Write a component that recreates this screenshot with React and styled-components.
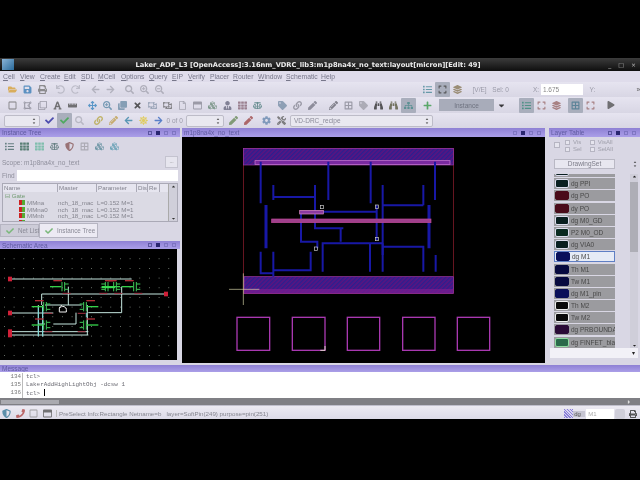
import React from "react";
import styled, { createGlobalStyle } from "styled-components";
import {
  FaFolderOpen, FaSave, FaPrint, FaUndo, FaRedo, FaArrowLeft, FaArrowRight, FaSearch, FaSearchPlus, FaSearchMinus,
  FaRegSquare, FaDrawPolygon, FaRegClone, FaFont, FaRulerHorizontal, FaArrowsAlt, FaClone, FaTimes, FaRegObjectUngroup,
  FaBalanceScale, FaCheck, FaLink, FaPencilAlt, FaSun, FaCog, FaTools, FaBinoculars, FaTag, FaPlus, FaList, FaTh,
  FaSitemap, FaRegFile, FaUserTie, FaPen, FaCaretDown, FaCaretUp, FaCaretRight, FaExpand, FaLayerGroup, FaPhone, FaShieldAlt,
  FaRegWindowMaximize, FaPlay, FaBorderAll, FaCubes
} from "react-icons/fa";

const sans = `"Liberation Sans", Arial, sans-serif`;

const GlobalStyle = createGlobalStyle`
  html, body { margin: 0; padding: 0; background: #000; }
  * { box-sizing: border-box; }
`;

const Page = styled.div`
  width: 640px;
  height: 480px;
  padding-top: 58px;
  background: #000;
  font-family: ${sans};
  overflow: hidden;
  display: flex;
  flex-direction: column;
  filter: blur(0.4px);
`;

const Window = styled.div`
  height: 361px;
  display: flex;
  flex-direction: column;
  background: #dddbe9;
  overflow: hidden;
`;

const TitleBar = styled.div`
  height: 13px;
  flex: none;
  position: relative;
  display: flex;
  align-items: center;
  justify-content: center;
  padding-right: 24px;
  background: linear-gradient(#3c3c3c, #0e0e0e);
  color: #ececec;
  font-family: "DejaVu Sans", sans-serif;
  font-size: 6.7px;
  font-weight: bold;
  white-space: nowrap;
`;

const AppBadge = styled.span`
  position: absolute;
  left: 2px;
  top: 1px;
  width: 12px;
  height: 11px;
  background: linear-gradient(135deg, #8ab4d8, #2a6a9a);
`;

const WinControls = styled.span`
  position: absolute;
  right: 4px;
  top: 0;
  height: 13px;
  display: flex;
  align-items: center;
  gap: 7px;
  color: #bbb;
  font-size: 6px;
  font-weight: normal;
`;

const MenuBar = styled.div`
  height: 11px;
  flex: none;
  display: flex;
  align-items: center;
  padding-left: 3px;
  background: #dfdceb;
  color: #77778a;
  font-size: 6.8px;
`;

const MenuItem = styled.span`
  width: ${(p) => p.$w}px;
  white-space: nowrap;
  &::first-letter { text-decoration: underline; }
`;

const Toolbar = styled.div`
  height: ${(p) => p.$h}px;
  flex: none;
  display: flex;
  align-items: center;
  padding-left: ${(p) => p.$pad ?? 4.5}px;
  background: linear-gradient(#e6e4f0, #d8d6e4);
  color: #8a8a98;
  font-size: 7px;
  white-space: nowrap;
`;

const Group = styled.div`
  display: flex;
  align-items: center;
  margin-left: ${(p) => p.$ml || 0}px;
`;

const ToolSlot = styled.span`
  width: ${(p) => p.$w || 15}px;
  height: 15px;
  flex: none;
  margin-left: ${(p) => p.$ml || 0}px;
  display: flex;
  align-items: center;
  justify-content: center;
  color: ${(p) => p.$c || "#888"};
  font-size: ${(p) => p.$s || 9}px;
  background: ${(p) => (p.$on ? "#a9aebc" : "transparent")};
  border-radius: 1px;
  svg { opacity: 0.8; }
`;

const Combo = styled.span`
  width: ${(p) => p.$w}px;
  height: ${(p) => p.$h || 12}px;
  flex: none;
  margin-left: ${(p) => p.$ml || 0}px;
  display: flex;
  align-items: center;
  justify-content: space-between;
  padding: 0 3px;
  background: #e9e8f0;
  border: 1px solid #bdbcc8;
  border-radius: 2px;
  color: #8a8a98;
  font-size: 6.5px;
`;

const Spin = styled.span`
  display: flex;
  flex-direction: column;
  color: #333;
  font-size: 4px;
  line-height: 3px;
`;

const Label = styled.span`
  margin-left: ${(p) => p.$ml || 0}px;
  width: ${(p) => (p.$w ? `${p.$w}px` : "auto")};
  color: ${(p) => p.$c || "#9a9aa8"};
  font-size: 6.5px;
`;

const ValueInput = styled.span`
  width: 42px;
  height: 11px;
  margin-left: 3px;
  padding-left: 2px;
  background: #fff;
  color: #888;
  font-size: 6.5px;
  line-height: 11px;
`;

const InstanceButton = styled.span`
  width: 55px;
  height: 12px;
  margin-left: 4.5px;
  display: flex;
  align-items: center;
  justify-content: center;
  background: #a8acba;
  color: #6f7380;
  font-size: 6.5px;
`;

const Workspace = styled.div`
  flex: none;
  height: 237px;
  display: flex;
  background: #d9d7e4;
`;

const LeftColumn = styled.div`
  width: 180px;
  flex: none;
  display: flex;
  flex-direction: column;
`;

const CenterColumn = styled.div`
  width: 363px;
  margin-left: 2px;
  flex: none;
  display: flex;
  flex-direction: column;
`;

const RightColumn = styled.div`
  width: 91px;
  margin-left: 4px;
  flex: none;
  display: flex;
  flex-direction: column;
`;

const DockTitle = styled.div`
  height: ${(p) => p.$h || 9}px;
  margin-top: ${(p) => p.$mt || 0}px;
  flex: none;
  display: flex;
  align-items: center;
  justify-content: space-between;
  padding: 0 4px 0 2px;
  background: linear-gradient(#8e80d4, #ab9fe8);
  color: #5f5aa0;
  font-size: 6.5px;
  white-space: nowrap;
`;

const DockButtons = styled.span`
  display: flex;
  align-items: center;
  gap: 4px;
`;

const DockGlyph = styled.span`
  width: 4px;
  height: 4px;
  border: ${(p) => (p.$solid ? "none" : "1px solid #5b56a0")};
  background: ${(p) => (p.$solid ? "#2a2670" : "transparent")};
  opacity: ${(p) => (p.$faint ? 0.45 : 1)};
`;

const IconStrip = styled.div`
  height: 18px;
  flex: none;
  display: flex;
  align-items: center;
  padding-left: 2px;
`;

const FieldRow = styled.div`
  height: ${(p) => p.$h}px;
  flex: none;
  display: flex;
  align-items: center;
  padding: 0 2px;
  color: #8f8f9c;
  font-size: 6.5px;
`;

const FindInput = styled.span`
  flex: 1;
  height: 11px;
  margin-left: 2px;
  background: #fff;
`;

const MiniButton = styled.span`
  width: 13px;
  height: 12px;
  margin-left: auto;
  background: #e6e5ee;
  border: 1px solid #c4c3cf;
  color: #777;
  font-size: 5px;
  line-height: 8px;
  text-align: center;
`;

const TreeTable = styled.div`
  height: 39px;
  margin: 1px 2px 0;
  flex: none;
  position: relative;
  overflow: hidden;
  background: #dbdae4;
  border: 1px solid #aaa9b6;
  color: #85858f;
  font-size: 6.2px;
`;

const TreeGrid = styled.div`
  display: grid;
  grid-template-columns: ${(p) => p.$cols};
  height: ${(p) => p.$h}px;
  align-items: center;
  white-space: nowrap;
  overflow: hidden;
`;

const HeadCell = styled.span`
  height: 8px;
  padding-left: 1px;
  background: #e6e5ef;
  border-right: 1px solid #aaa9b6;
  line-height: 8px;
  color: #83838f;
`;

const GateLabel = styled.span`
  padding-left: 2px;
  color: #6f9a6f;
`;

const NameCell = styled.span`
  display: flex;
  align-items: center;
  gap: 2px;
  padding-left: 16px;
`;

const MosMark = styled.span`
  width: 6px;
  height: 5px;
  background: linear-gradient(90deg, #c22 50%, #5a3 50%);
`;

const TableScroll = styled.span`
  position: absolute;
  right: 0;
  top: 0;
  bottom: 0;
  width: 9px;
  background: #d0cfda;
  border-left: 1px solid #aaa;
  display: flex;
  flex-direction: column;
  justify-content: space-between;
  align-items: center;
  color: #333;
  font-size: 5px;
`;

const TabRow = styled.div`
  height: 16px;
  flex: none;
  display: flex;
  align-items: flex-end;
`;

const Tab = styled.span`
  height: ${(p) => (p.$active ? 15 : 13)}px;
  width: ${(p) => p.$w}px;
  margin-bottom: ${(p) => (p.$active ? 0 : 1)}px;
  display: flex;
  align-items: center;
  gap: 4px;
  padding-left: 5px;
  background: ${(p) => (p.$active ? "#eceaf3" : "#cdccd8")};
  border: 1px solid #b6b5c2;
  color: #8a8a96;
  font-size: 6.3px;
  white-space: nowrap;
  svg { color: #7ab87a; font-size: 8px; flex: none; }
`;

const Viewport = styled.div`
  flex: none;
  height: ${(p) => p.$h}px;
  width: ${(p) => (p.$w ? `${p.$w}px` : "auto")};
  background: #000;
  overflow: hidden;
  svg { display: block; }
`;

const VisRow = styled.div`
  height: 17px;
  margin-top: 2px;
  flex: none;
  display: flex;
  align-items: flex-start;
  padding-left: 5px;
  color: #a0a0ac;
  font-size: 6px;
`;

const VisColumn = styled.div`
  margin-left: ${(p) => p.$ml}px;
  display: grid;
  grid-template-columns: 5px auto;
  column-gap: 3px;
  row-gap: 1px;
  line-height: 6px;
  align-items: center;
`;

const VisBox = styled.span`
  width: ${(p) => p.$s || 5}px;
  height: ${(p) => p.$s || 5}px;
  margin-top: ${(p) => p.$mt || 0}px;
  background: #e6e5ee;
  border: 1px solid #b6b5c2;
`;

const SetRow = styled.div`
  height: 12px;
  margin-top: 2px;
  flex: none;
  display: flex;
  align-items: center;
  padding-left: 5px;
`;

const SetButton = styled.span`
  width: 61px;
  height: 10px;
  background: #e8e7f0;
  border: 1px solid #b9b8c4;
  color: #7c7c88;
  font-size: 6.5px;
  line-height: 8px;
  text-align: center;
`;

const SetSpin = styled(Spin)`
  margin-left: 18px;
`;

const LayerArea = styled.div`
  height: 174px;
  margin-top: 4px;
  flex: none;
  display: flex;
  padding-left: 5px;
  position: relative;
  overflow: hidden;
`;

const LayerList = styled.div`
  width: 61px;
  margin-top: -8px;
  display: flex;
  flex-direction: column;
  gap: 1.2px;
`;

const LayerRow = styled.div`
  height: 11px;
  flex: none;
  display: flex;
  align-items: center;
  gap: 2px;
  background: ${(p) => (p.$sel ? "#e6ebf6" : "#9b9b9f")};
  border: ${(p) => (p.$sel ? "1px solid #5f7fc4" : "none")};
  color: #484848;
  font-size: 6.5px;
  white-space: nowrap;
  overflow: hidden;
`;

const Swatch = styled.span`
  width: 14px;
  height: 9px;
  flex: none;
  margin-left: 1px;
  border-radius: 2px;
  background: ${(p) => p.$fill};
  border: 1px solid ${(p) => p.$line};
`;

const ListScroll = styled.div`
  position: absolute;
  left: 81px;
  top: 0;
  bottom: 0;
  width: 8px;
  background: #cfced9;
  display: flex;
  flex-direction: column;
  justify-content: space-between;
  align-items: center;
  color: #222;
  font-size: 5px;
`;

const ListThumb = styled.span`
  position: absolute;
  left: 0;
  top: 8px;
  width: 8px;
  height: 70px;
  background: #aeaeb6;
`;

const LayerCombo = styled.div`
  width: 88px;
  margin-left: 1px;
  height: 10px;
  flex: none;
  padding-right: 3px;
  background: #f2f1f7;
  color: #222;
  font-size: 6px;
  line-height: 10px;
  text-align: right;
`;

const Message = styled.div`
  flex: none;
  height: 26px;
  display: grid;
  grid-template-columns: 23px 1fr;
  background: #fff;
  color: #6c6c74;
  font-family: "Liberation Mono", monospace;
  font-size: 5.9px;
  line-height: 8px;
  padding-top: 1px;
`;

const LineNumbers = styled.div`
  text-align: right;
  padding-right: 1px;
  border-right: 1px solid #bbb;
  color: #777;
`;

const MessageText = styled.pre`
  margin: 0;
  padding-left: 3px;
  font: inherit;
`;

const Cursor = styled.span`
  display: inline-block;
  width: 1px;
  height: 7px;
  background: #000;
  vertical-align: -1px;
`;

const HScroll = styled.div`
  flex: none;
  height: 7px;
  display: flex;
  align-items: center;
  justify-content: space-between;
  padding: 0 8px 0 1px;
  background: #7f7f84;
  color: #ddd;
  font-size: 6px;
`;

const HThumb = styled.span`
  width: 58px;
  height: 4px;
  background: #aaaab0;
`;

const StatusBar = styled.div`
  flex: 1;
  display: flex;
  align-items: center;
  border-top: 1px solid #c0bfcc;
  background: linear-gradient(#eceaf2, #dad8e6);
  color: #85858f;
  font-size: 6.2px;
  white-space: pre;
`;

const StatusText = styled.span`
  margin-left: 2px;
  padding-left: 2px;
  width: 511px;
  border-left: 1px solid #bbb;
`;

const PatternChip = styled.span`
  width: 9px;
  height: 9px;
  background: repeating-linear-gradient(45deg, #8a80d8 0 1px, #d8d4f0 1px 2px);
`;

const ChipText = styled.span`
  width: 12px;
  padding-left: 1px;
  background: #c6c5d2;
  color: #555;
  font-size: 6px;
`;

const ChipInput = styled.span`
  width: 28px;
  height: 10px;
  margin-left: 1px;
  padding-left: 2px;
  background: #fff;
  color: #aaa;
  font-size: 6px;
  line-height: 10px;
`;

const ChipButton = styled.span`
  width: 10px;
  height: 10px;
  margin-left: 1px;
  border-radius: 2px;
  background: #cfced9;
`;

const menu = [
  ["Cell", 17], ["View", 20], ["Create", 24], ["Edit", 17], ["SDL", 17], ["MCell", 23], ["Options", 28],
  ["Query", 23], ["EIP", 16], ["Verify", 22], ["Placer", 23], ["Router", 25], ["Window", 28], ["Schematic", 35], ["Help", 20]
];

const bar1 = [
  { ml: 0, items: [[FaFolderOpen, "#d8a23a"], [FaSave, "#3c7fb8"], [FaPrint, "#777"]] },
  { ml: 3, items: [[FaUndo, "#b4b4c0"], [FaRedo, "#b4b4c0"]] },
  { ml: 5, items: [[FaArrowLeft, "#a8a8b4"], [FaArrowRight, "#a8a8b4"]] },
  { ml: 4, items: [[FaSearch, "#a4a4b0"], [FaSearchPlus, "#a4a4b0"], [FaSearchMinus, "#a4a4b0"]] }
];

const bar2 = [
  { ml: 0, items: [[FaRegSquare, "#666"], [FaDrawPolygon, "#8a8a96"], [FaRegClone, "#8a8a96"], [FaFont, "#555"], [FaRulerHorizontal, "#555"]] },
  { ml: 5, items: [[FaArrowsAlt, "#3a86c0"], [FaSearchPlus, "#5c8aa8"], [FaClone, "#6f8fa8"]] },
  { ml: 0, items: [[FaTimes, "#333"], [FaRegObjectUngroup, "#7a8aa0"], [FaRegObjectUngroup, "#555"], [FaRegFile, "#9a9aa6"], [FaRegWindowMaximize, "#8a8a96"], [FaCubes, "#6a8a78"], [FaUserTie, "#6a6a80"], [FaTh, "#8a6a7a"], [FaBalanceScale, "#4a7a7a"]] },
  { ml: 10, items: [[FaTag, "#7a90a8"], [FaLink, "#8a8a96"], [FaPen, "#7a7a88"]] },
  { ml: 6, items: [[FaPencilAlt, "#6a6a74"], [FaBorderAll, "#8a8a96"], [FaTag, "#a0a0aa"], [FaBinoculars, "#333"], [FaBinoculars, "#5a5a40"], [FaSitemap, "#4a8a8a", true]] },
  { ml: 4, items: [[FaPlus, "#3a9a4a"]] }
];

const bar2Right = [
  { ml: 10, items: [[FaList, "#3a8a7a", true], [FaExpand, "#9a6a6a"], [FaLayerGroup, "#9a6a6a"]] },
  { ml: 4, items: [[FaBorderAll, "#4a7a90", true], [FaExpand, "#9a6a6a"]] }
];

const layers = [
  { n: "dg PPI", f: "#0a1f20", l: "#dde" },
  { n: "dg PO", f: "#4a0b1a", l: "#4a0b1a" },
  { n: "dy PO", f: "#4a0b1a", l: "#4a0b1a" },
  { n: "dg M0_GD", f: "#0a1f20", l: "#dde" },
  { n: "P2 M0_OD", f: "#0a2a20", l: "#dde" },
  { n: "dg VIA0", f: "#0a1f20", l: "#dde" },
  { n: "dg M1", f: "#0a0f5a", l: "#0a0f5a", sel: true },
  { n: "Th M1", f: "#080a40", l: "#080a40" },
  { n: "Tw M1", f: "#080a40", l: "#080a40" },
  { n: "dg M1_pin", f: "#0a0f5a", l: "#0a0f5a" },
  { n: "Th M2", f: "#0a0a0a", l: "#eee" },
  { n: "Tw M2", f: "#0a0a0a", l: "#eee" },
  { n: "dg PRBOUNDA", f: "#2a0a36", l: "#2a0a36" },
  { n: "dg FINFET_bla", f: "#2a6a4a", l: "#8fdca0" }
];

const Blue = ({ d, w = 6 }) => <path d={d} fill="none" stroke="#1818a6" strokeWidth={w} />;

const LayoutDrawing = () => (
  <svg width="363" height="226" viewBox="-144 -9 1089 678">
    <defs>
      <pattern id="rail" width="9" height="9" patternUnits="userSpaceOnUse" patternTransform="rotate(45)">
        <rect width="9" height="9" fill="#5a1480" />
        <rect width="4" height="9" fill="#2a2090" />
      </pattern>
    </defs>
    <rect x="40" y="25" width="630" height="435" fill="none" stroke="#9a2030" strokeWidth="2" />
    <rect x="40" y="25" width="630" height="50" fill="url(#rail)" stroke="#a03aa8" strokeWidth="2" />
    <rect x="42" y="410" width="628" height="50" fill="url(#rail)" stroke="#a03aa8" strokeWidth="2" />
    <rect x="42" y="447" width="628" height="13" fill="#7c1c90" opacity="0.7" />
    <rect x="75" y="62" width="585" height="11" fill="#7a2aa0" stroke="#d47ed8" strokeWidth="2" />
    <Blue d="M92 65V190M295 65V180M422 65V190M615 65V180" />
    <Blue d="M130 135V180M130 171H255M255 135V265H340M332 262V305" />
    <Blue d="M458 135V345M458 196H580M580 135V196" />
    <Blue d="M108 195V325M597 195V325" w={9} />
    <Blue d="M280 215H440M440 195V300" />
    <Blue d="M213 215V305H262V325" />
    <Blue d="M278 395V310H458M420 310V395M458 310V395" />
    <Blue d="M458 320H580V395M617 345V395" />
    <Blue d="M92 335V400H130M130 335V410M130 391H242V335" />
    <rect x="125" y="237" width="478" height="11" fill="#a0408c" stroke="#c04a9a" strokeWidth="2" />
    <rect x="209" y="211" width="71" height="11" fill="#8c3aa0" stroke="#e090c8" strokeWidth="2" />
    <g fill="none" stroke="#cfcfcf" strokeWidth="2">
      <rect x="271" y="196" width="9" height="10" />
      <rect x="436" y="195" width="9" height="10" />
      <rect x="436" y="292" width="9" height="10" />
      <rect x="253" y="321" width="9" height="10" />
    </g>
    <g fill="none" stroke="#a838b0" strokeWidth="4">
      <rect x="21" y="532" width="98" height="99" />
      <rect x="187" y="532" width="98" height="99" />
      <rect x="352" y="532" width="97" height="99" />
      <rect x="518" y="532" width="97" height="99" />
      <rect x="682" y="532" width="97" height="99" />
    </g>
    <path d="M271 631H285V618" fill="none" stroke="#ddd0c8" strokeWidth="3" />
    <path d="M40 400V495M-3 448H88" fill="none" stroke="#d8d4a8" strokeWidth="2" />
  </svg>
);

const Mos = ({ x, y, flip }) => (
  <g transform={`translate(${x} ${y}) scale(${flip ? -1 : 1} 1)`}>
    <path d="M-4 -14V14M4 -14V-8H16M4 14V8H16M4 -8V8" fill="none" stroke="#3fc95a" strokeWidth="3" />
    <path d="M-40 0H-6" stroke="#35d04a" strokeWidth="4" />
    <path d="M-30 -18H-4" stroke="#b0303a" strokeWidth="4" />
    <path d="M-2 20H22" stroke="#a03040" strokeWidth="3" />
  </g>
);

const SchematicDrawing = () => {
  const dots = [];
  for (let y = 55; y < 350; y += 29) {
    for (let x = 12; x < 530; x += 29) dots.push(<rect key={`${x}-${y}`} x={x} y={y} width="2.5" height="2.5" fill="#8f9a90" />);
  }
  return (
    <svg width="177" height="111" viewBox="0 27 531 333">
      {dots}
      <path
        d="M30 117H395M125 162H500M125 162V195M205 140V195M135 195H245M365 140V218H265M228 218V252H160M30 219H160M30 275H265M30 285H265M115 195V290M128 195V290M262 195V285M115 252H135"
        fill="none"
        stroke="#c5e6df"
        strokeWidth="3"
      />
      <path d="M115 200V288M128 200V288M259 218V232" stroke="#7ad8d8" strokeWidth="3" />
      <Mos x={190} y={140} />
      <Mos x={320} y={140} flip />
      <Mos x={345} y={140} />
      <Mos x={405} y={140} />
      <Mos x={135} y={200} />
      <Mos x={135} y={255} />
      <Mos x={255} y={200} flip />
      <Mos x={255} y={255} flip />
      <path d="M305 142H345" stroke="#39e050" strokeWidth="5" />
      <g fill="#d02038">
        <rect x="24" y="110" width="12" height="14" />
        <rect x="24" y="212" width="12" height="14" />
        <rect x="24" y="268" width="12" height="24" />
        <rect x="492" y="155" width="12" height="14" />
      </g>
      <path d="M178 214V204Q178 199 183 202V197Q187 196 188 200Q194 197 195 203Q200 203 199 208V216H178Z" fill="#000" stroke="#f2f2f2" strokeWidth="3" />
    </svg>
  );
};

const Icons = ({ list }) =>
  list.map(([Icon, c, on], i) => (
    <ToolSlot key={i} $c={c} $on={on}>
      <Icon />
    </ToolSlot>
  ));

const Dock = () => (
  <DockButtons>
    <DockGlyph />
    <DockGlyph $solid />
    <DockGlyph $faint />
    <DockGlyph $faint />
  </DockButtons>
);

const ComboBox = ({ w, ml, children }) => (
  <Combo $w={w} $ml={ml}>
    <span>{children}</span>
    <Spin>
      <FaCaretUp />
      <FaCaretDown />
    </Spin>
  </Combo>
);

const treeCols = "55px 39px 40px 11px 12px 1fr";

const App = () => (
  <Page>
    <GlobalStyle />
    <Window>
      <TitleBar>
        <AppBadge />
        Laker_ADP_L3 [OpenAccess]:3.16nm_VDRC_lib3:m1p8na4x_no_text:layout[micron][Edit: 49]
        <WinControls>
          <span>_</span>
          <span>□</span>
          <span>×</span>
        </WinControls>
      </TitleBar>
      <MenuBar>
        {menu.map(([t, w]) => (
          <MenuItem key={t} $w={w}>{t}</MenuItem>
        ))}
      </MenuBar>

      <Toolbar $h={15}>
        {bar1.map((g, i) => (
          <Group key={i} $ml={g.ml}><Icons list={g.items} /></Group>
        ))}
        <Group $ml={253}>
          <Icons list={[[FaList, "#4a8a9a"], [FaExpand, "#444", true], [FaLayerGroup, "#8a7a5a"]]} />
        </Group>
        <Label $ml={8} $w={20}>[V/E]</Label>
        <Label $w={41}>Sel: 0</Label>
        <Label $w={5}>X:</Label>
        <ValueInput>1.675</ValueInput>
        <Label $ml={7}>Y:</Label>
        <Label $ml={41} $c="#555">»</Label>
      </Toolbar>

      <Toolbar $h={16}>
        {bar2.map((g, i) => (
          <Group key={i} $ml={g.ml}><Icons list={g.items} /></Group>
        ))}
        <InstanceButton>Instance</InstanceButton>
        <ToolSlot $c="#111" $s={9}><FaCaretDown /></ToolSlot>
        {bar2Right.map((g, i) => (
          <Group key={i} $ml={g.ml}><Icons list={g.items} /></Group>
        ))}
        <ToolSlot $c="#555" $s={8} $ml={5}><FaPlay /></ToolSlot>
      </Toolbar>

      <Toolbar $h={15} $pad={4}>
        <ComboBox w={36}></ComboBox>
        <Group $ml={1.5}>
          <ToolSlot $c="#2a2aa0"><FaCheck /></ToolSlot>
          <ToolSlot $c="#3aa84a" $on><FaCheck /></ToolSlot>
          <ToolSlot $c="#b0b0bc"><FaSearch /></ToolSlot>
        </Group>
        <Group $ml={4}>
          <ToolSlot $c="#b8a848"><FaLink /></ToolSlot>
          <ToolSlot $c="#c0a050"><FaPencilAlt /></ToolSlot>
          <ToolSlot $c="#3a86a8"><FaArrowLeft /></ToolSlot>
          <ToolSlot $c="#e0c840"><FaSun /></ToolSlot>
          <ToolSlot $c="#3a6ac0"><FaArrowRight /></ToolSlot>
        </Group>
        <Label $ml={1} $w={19}>0 of 0</Label>
        <ComboBox w={38}></ComboBox>
        <Group $ml={2}>
          <ToolSlot $c="#6a8a5a"><FaPen /></ToolSlot>
          <ToolSlot $c="#a04a4a"><FaPen /></ToolSlot>
        </Group>
        <Group $ml={3}>
          <ToolSlot $c="#6a8ab0"><FaCog /></ToolSlot>
          <ToolSlot $c="#666"><FaTools /></ToolSlot>
        </Group>
        <ComboBox w={143} ml={1.5}>VD-DRC_recipe</ComboBox>
      </Toolbar>

      <Workspace>
        <LeftColumn>
          <DockTitle>
            Instance Tree
            <Dock />
          </DockTitle>
          <IconStrip>
            <Icons
              list={[
                [FaList, "#4a6a6a"], [FaTh, "#3a6a5a"], [FaTh, "#6ab8a0"], [FaBalanceScale, "#4a6a6a"],
                [FaShieldAlt, "#8a5a5a"], [FaBorderAll, "#a0a0a8"], [FaCubes, "#5a8a9a"], [FaCubes, "#5a9ab0"]
              ]}
            />
          </IconStrip>
          <FieldRow $h={14}>
            Scope: m1p8na4x_no_text
            <MiniButton>...</MiniButton>
          </FieldRow>
          <FieldRow $h={13}>
            Find
            <FindInput />
          </FieldRow>
          <TreeTable>
            <TreeGrid $cols={treeCols} $h={8}>
              <HeadCell>Name</HeadCell>
              <HeadCell>Master</HeadCell>
              <HeadCell>Parameter</HeadCell>
              <HeadCell>Dis</HeadCell>
              <HeadCell>Re</HeadCell>
              <HeadCell />
            </TreeGrid>
            <TreeGrid $cols="1fr" $h={7}>
              <GateLabel>⊟ Gate</GateLabel>
            </TreeGrid>
            {["MMna", "MMna0", "MMnb", "MMnb0"].map((n) => (
              <TreeGrid key={n} $cols={treeCols} $h={6.5}>
                <NameCell>
                  <MosMark />
                  {n}
                </NameCell>
                <span>nch_18_mac</span>
                <span>L=0.152 M=1</span>
              </TreeGrid>
            ))}
            <TableScroll>
              <FaCaretUp />
              <FaCaretDown />
            </TableScroll>
          </TreeTable>
          <TabRow>
            <Tab $w={39}><FaCheck /> Net List</Tab>
            <Tab $w={59} $active><FaCheck /> Instance Tree</Tab>
          </TabRow>
          <DockTitle $h={8} $mt={3}>
            Schematic Area
            <Dock />
          </DockTitle>
          <Viewport $h={111} $w={177}>
            <SchematicDrawing />
          </Viewport>
        </LeftColumn>

        <CenterColumn>
          <DockTitle>
            m1p8na4x_no_text
            <DockButtons>
              <DockGlyph $faint />
              <DockGlyph $solid />
              <DockGlyph $faint />
              <DockGlyph $faint />
            </DockButtons>
          </DockTitle>
          <Viewport $h={226}>
            <LayoutDrawing />
          </Viewport>
        </CenterColumn>

        <RightColumn>
          <DockTitle>
            Layer Table
            <Dock />
          </DockTitle>
          <VisRow>
            <VisBox $s={6} $mt={3} />
            <VisColumn $ml={5}>
              <VisBox /><span>Vis</span>
              <VisBox /><span>Sel</span>
            </VisColumn>
            <VisColumn $ml={8}>
              <VisBox /><span>VisAll</span>
              <VisBox /><span>SelAll</span>
            </VisColumn>
          </VisRow>
          <SetRow>
            <SetButton>DrawingSet</SetButton>
            <SetSpin>
              <FaCaretUp />
              <FaCaretDown />
            </SetSpin>
          </SetRow>
          <LayerArea>
            <LayerList>
              <LayerRow><Swatch $fill="#0a1f20" $line="#dde" /></LayerRow>
              {layers.map((l, i) => (
                <LayerRow key={i} $sel={l.sel}>
                  <Swatch $fill={l.f} $line={l.l} />
                  {l.n}
                </LayerRow>
              ))}
            </LayerList>
            <ListScroll>
              <FaCaretUp />
              <ListThumb />
              <FaCaretDown />
            </ListScroll>
          </LayerArea>
          <LayerCombo>▾</LayerCombo>
        </RightColumn>
      </Workspace>

      <DockTitle $h={7}>Message</DockTitle>
      <Message>
        <LineNumbers>
          134<br />135<br />136
        </LineNumbers>
        <MessageText>
          tcl&gt;{"\n"}LakerAddHighLightObj -dcsw 1{"\n"}tcl&gt; <Cursor />
        </MessageText>
      </Message>
      <HScroll>
        <HThumb />
        <FaCaretRight />
      </HScroll>
      <StatusBar>
        <Group>
          <ToolSlot $w={13.5} $c="#3a7a9a" $s={9}><FaShieldAlt /></ToolSlot>
          <ToolSlot $w={13.5} $c="#b04a4a" $s={9}><FaPhone /></ToolSlot>
          <ToolSlot $w={13.5} $c="#888" $s={9}><FaRegSquare /></ToolSlot>
          <ToolSlot $w={13.5} $c="#555" $s={9}><FaRegWindowMaximize /></ToolSlot>
        </Group>
        <StatusText>PreSelect Info:Rectangle Netname=b   layer=SoftPin(249) purpose=pin(251)</StatusText>
        <PatternChip />
        <ChipText>dg</ChipText>
        <ChipInput>M1</ChipInput>
        <ChipButton />
        <ToolSlot $c="#333" $s={8}><FaPrint /></ToolSlot>
      </StatusBar>
    </Window>
  </Page>
);

export default App;
